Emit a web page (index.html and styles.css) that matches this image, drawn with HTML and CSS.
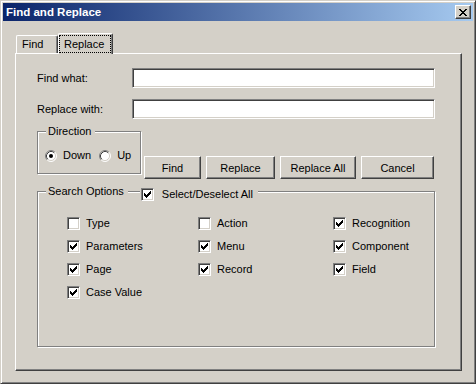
FILE: index.html
```html
<!DOCTYPE html>
<html lang="en">
<head>
  <meta charset="UTF-8">
  <title>Find and Replace</title>
  <link rel="stylesheet" href="styles.css">
</head>
<body>

<div class="window">
  <div class="titlebar">
    <span class="title">Find and Replace</span>
    <span class="close">
      <svg width="8" height="7" viewBox="0 0 8 7" shape-rendering="crispEdges"><path d="M0 0h2v1H0zM6 0h2v1H6zM1 1h2v1H1zM5 1h2v1H5zM2 2h4v1H2zM3 3h2v1H3zM2 4h4v1H2zM1 5h2v1H1zM5 5h2v1H5zM0 6h2v1H0zM6 6h2v1H6z"/></svg>
    </span>
  </div>

  <div class="client">
    <div class="tabs">
      <span class="tab">Find</span>
      <span class="tab active"><span class="focus">Replace</span></span>
    </div>

    <div class="panel">
      <div class="row">
        <label class="caption">Find what:</label>
        <input class="edit" type="text">
      </div>
      <div class="row">
        <label class="caption">Replace with:</label>
        <input class="edit" type="text">
      </div>

      <div class="actions">
        <fieldset class="group direction">
          <legend>Direction</legend>
          <div class="radios">
            <svg class="radio" width="12" height="12" viewBox="0 0 12 12">
              <circle cx="6" cy="6" r="5" fill="#fff"/>
              <path d="M2.11 9.89A5.5 5.5 0 0 1 9.89 2.11" fill="none" stroke="#808080"/>
              <path d="M9.89 2.11A5.5 5.5 0 0 1 2.11 9.89" fill="none" stroke="#fff"/>
              <path d="M2.82 9.18A4.5 4.5 0 0 1 9.18 2.82" fill="none" stroke="#404040"/>
              <path d="M9.18 2.82A4.5 4.5 0 0 1 2.82 9.18" fill="none" stroke="#d4d0c8"/>
              <circle cx="6" cy="6" r="2" fill="#000"/>
            </svg>
            <span class="radio-text">Down</span>
            <svg class="radio" width="12" height="12" viewBox="0 0 12 12">
              <circle cx="6" cy="6" r="5" fill="#fff"/>
              <path d="M2.11 9.89A5.5 5.5 0 0 1 9.89 2.11" fill="none" stroke="#808080"/>
              <path d="M9.89 2.11A5.5 5.5 0 0 1 2.11 9.89" fill="none" stroke="#fff"/>
              <path d="M2.82 9.18A4.5 4.5 0 0 1 9.18 2.82" fill="none" stroke="#404040"/>
              <path d="M9.18 2.82A4.5 4.5 0 0 1 2.82 9.18" fill="none" stroke="#d4d0c8"/>
            </svg>
            <span class="radio-text">Up</span>
          </div>
        </fieldset>
        <div class="buttons">
          <button class="btn find">Find</button>
          <button class="btn replace">Replace</button>
          <button class="btn replace-all">Replace All</button>
          <button class="btn cancel">Cancel</button>
        </div>
      </div>

      <fieldset class="group options">
        <legend>
          <span>Search Options</span>
          <span class="etch"></span>
          <span class="select-all">
            <span class="check"><svg class="tick" width="7" height="7" viewBox="0 0 7 7" shape-rendering="crispEdges"><path d="M6 0h1v1H6zM5 1h2v1H5zM0 2h1v1H0zM4 2h3v1H4zM0 3h2v1H0zM3 3h3v1H3zM0 4h5v1H0zM1 5h3v1H1zM2 6h1v1H2z"/></svg></span>
            <span>Select/Deselect All</span>
          </span>
        </legend>
        <div class="opts">
          <div class="opt"><span class="check"></span>Type</div>
          <div class="opt"><span class="check"></span>Action</div>
          <div class="opt"><span class="check"><svg class="tick" width="7" height="7" viewBox="0 0 7 7" shape-rendering="crispEdges"><path d="M6 0h1v1H6zM5 1h2v1H5zM0 2h1v1H0zM4 2h3v1H4zM0 3h2v1H0zM3 3h3v1H3zM0 4h5v1H0zM1 5h3v1H1zM2 6h1v1H2z"/></svg></span>Recognition</div>

          <div class="opt"><span class="check"><svg class="tick" width="7" height="7" viewBox="0 0 7 7" shape-rendering="crispEdges"><path d="M6 0h1v1H6zM5 1h2v1H5zM0 2h1v1H0zM4 2h3v1H4zM0 3h2v1H0zM3 3h3v1H3zM0 4h5v1H0zM1 5h3v1H1zM2 6h1v1H2z"/></svg></span>Parameters</div>
          <div class="opt"><span class="check"><svg class="tick" width="7" height="7" viewBox="0 0 7 7" shape-rendering="crispEdges"><path d="M6 0h1v1H6zM5 1h2v1H5zM0 2h1v1H0zM4 2h3v1H4zM0 3h2v1H0zM3 3h3v1H3zM0 4h5v1H0zM1 5h3v1H1zM2 6h1v1H2z"/></svg></span>Menu</div>
          <div class="opt"><span class="check"><svg class="tick" width="7" height="7" viewBox="0 0 7 7" shape-rendering="crispEdges"><path d="M6 0h1v1H6zM5 1h2v1H5zM0 2h1v1H0zM4 2h3v1H4zM0 3h2v1H0zM3 3h3v1H3zM0 4h5v1H0zM1 5h3v1H1zM2 6h1v1H2z"/></svg></span>Component</div>

          <div class="opt"><span class="check"><svg class="tick" width="7" height="7" viewBox="0 0 7 7" shape-rendering="crispEdges"><path d="M6 0h1v1H6zM5 1h2v1H5zM0 2h1v1H0zM4 2h3v1H4zM0 3h2v1H0zM3 3h3v1H3zM0 4h5v1H0zM1 5h3v1H1zM2 6h1v1H2z"/></svg></span>Page</div>
          <div class="opt"><span class="check"><svg class="tick" width="7" height="7" viewBox="0 0 7 7" shape-rendering="crispEdges"><path d="M6 0h1v1H6zM5 1h2v1H5zM0 2h1v1H0zM4 2h3v1H4zM0 3h2v1H0zM3 3h3v1H3zM0 4h5v1H0zM1 5h3v1H1zM2 6h1v1H2z"/></svg></span>Record</div>
          <div class="opt"><span class="check"><svg class="tick" width="7" height="7" viewBox="0 0 7 7" shape-rendering="crispEdges"><path d="M6 0h1v1H6zM5 1h2v1H5zM0 2h1v1H0zM4 2h3v1H4zM0 3h2v1H0zM3 3h3v1H3zM0 4h5v1H0zM1 5h3v1H1zM2 6h1v1H2z"/></svg></span>Field</div>

          <div class="opt"><span class="check"><svg class="tick" width="7" height="7" viewBox="0 0 7 7" shape-rendering="crispEdges"><path d="M6 0h1v1H6zM5 1h2v1H5zM0 2h1v1H0zM4 2h3v1H4zM0 3h2v1H0zM3 3h3v1H3zM0 4h5v1H0zM1 5h3v1H1zM2 6h1v1H2z"/></svg></span>Case Value</div>
        </div>
      </fieldset>
    </div>
  </div>
</div>

</body>
</html>
```

FILE: styles.css
```css
body {
  margin: 0;
  font-family: "Liberation Sans", Arial, sans-serif;
  font-size: 11px;
  color: #000;
  background: #d4d0c8;
}
.window {
  box-sizing: border-box;
  width: 476px;
  height: 384px;
  padding: 2px;
  background: #d4d0c8;
  border: 1px solid;
  border-color: #d4d0c8 #404040 #404040 #d4d0c8;
  box-shadow: inset 1px 1px #fff, inset -1px -1px #808080;
}
.titlebar {
  display: flex;
  align-items: flex-start;
  justify-content: space-between;
  height: 18px;
  background: linear-gradient(to right, #0a246a, #a6caf0);
}
.title {
  padding: 2px 0 0 3px;
  color: #fff;
  font-weight: bold;
  font-size: 11.5px;
  line-height: 14px;
}
.close {
  display: flex;
  align-items: center;
  justify-content: center;
  box-sizing: border-box;
  width: 16px;
  height: 14px;
  margin: 2px 2px 0 0;
  background: #d4d0c8;
  border: 1px solid;
  border-color: #fff #404040 #404040 #fff;
  box-shadow: inset -1px -1px #808080;
}
.client {
  padding: 12px 0 0 12px;
}
.tabs {
  display: flex;
  align-items: flex-end;
  height: 20px;
}
.tab {
  box-sizing: border-box;
  height: 18px;
  padding: 2px 0 0 5px;
  line-height: 13px;
  border: 1px solid #fff;
  border-right-color: #404040;
  border-bottom: none;
  border-radius: 2px 2px 0 0;
  box-shadow: inset -1px 0 #808080;
}
.tab:first-child {
  width: 42px;
  margin-left: 1px;
}
.tab.active {
  position: relative;
  z-index: 1;
  width: 55px;
  height: 21px;
  margin-bottom: -1px;
  padding: 2px 0 0 1px;
  background: #d4d0c8;
}
.focus {
  display: inline-block;
  padding: 1px 6px 1px 4px;
  outline: 1px dotted #000;
  line-height: 14px;
}
.panel {
  box-sizing: border-box;
  width: 447px;
  height: 318px;
  padding: 14px 0 0 21px;
  border: 1px solid;
  border-color: #fff #404040 #404040 #fff;
  box-shadow: inset -1px -1px #808080;
}
.row {
  display: flex;
  align-items: center;
  margin-bottom: 11px;
}
.caption {
  width: 95px;
}
.edit {
  box-sizing: border-box;
  width: 303px;
  height: 20px;
  margin: 0;
  padding: 0 3px;
  background: #fff;
  border: 1px solid;
  border-color: #808080 #fff #fff #808080;
  box-shadow: inset 1px 1px #404040, inset -1px -1px #d4d0c8;
  outline: none;
  font: inherit;
}
.group {
  margin: 0;
  padding: 0;
  border: 1px solid #808080;
  box-shadow: inset 1px 1px #fff, 1px 1px #fff;
}
.group legend {
  margin-left: 8px;
  padding: 0 4px 0 2px;
  line-height: 13px;
  background: #d4d0c8;
}
.actions {
  display: flex;
  align-items: flex-start;
  margin-top: -5px;
}
.direction {
  width: 104px;
  box-sizing: border-box;
}
.radios {
  display: flex;
  align-items: center;
  padding: 11px 0 11px 7px;
  line-height: 13px;
}
.radio-text {
  margin: 0 8px 0 6px;
}
.buttons {
  display: flex;
  gap: 5px;
  margin: 31px 0 0 3px;
}
.btn {
  box-sizing: border-box;
  height: 23px;
  margin: 0;
  padding: 0;
  background: #d4d0c8;
  border: 1px solid;
  border-color: #fff #404040 #404040 #fff;
  box-shadow: inset -1px -1px #808080;
  font: inherit;
  color: #000;
}
.find { width: 57px; }
.replace { width: 69px; }
.replace-all { width: 76px; }
.cancel { width: 73px; }
.options {
  width: 398px;
  box-sizing: border-box;
  margin-top: 6px;
}
.options legend {
  display: flex;
  align-items: flex-start;
  height: 13px;
  padding: 0 0 0 2px;
}
.etch {
  width: 12px;
  height: 1px;
  margin: 6px 1px 0 4px;
  background: #808080;
  box-shadow: 0 1px #fff;
}
.select-all {
  display: flex;
  align-items: center;
  gap: 8px;
  margin-top: 3px;
  padding-right: 5px;
  background: #d4d0c8;
}
.check {
  display: flex;
  align-items: center;
  justify-content: center;
  box-sizing: border-box;
  width: 13px;
  height: 13px;
  background: #fff;
  border: 1px solid;
  border-color: #808080 #fff #fff #808080;
  box-shadow: inset 1px 1px #404040, inset -1px -1px #d4d0c8;
}
.opts {
  display: grid;
  grid-template-columns: 131px 135px auto;
  row-gap: 10px;
  padding: 19px 0 47px 29px;
}
.opt {
  display: flex;
  align-items: center;
  gap: 6px;
  height: 13px;
  line-height: 13px;
}
```
